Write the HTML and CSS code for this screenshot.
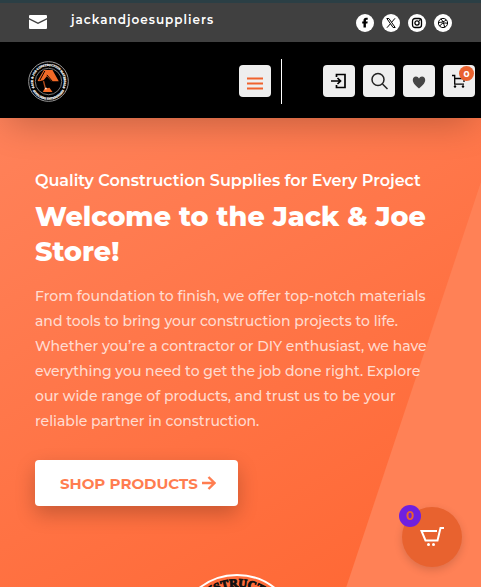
FILE: index.html
```html
<!DOCTYPE html>
<html lang="en">
<head>
<meta charset="utf-8">
<meta name="viewport" content="width=device-width, initial-scale=1">
<title>Jack &amp; Joe Suppliers</title>
<link rel="stylesheet" href="styles.css">
</head>
<body>
<svg class="defs" aria-hidden="true">
  <defs>
    <path id="arc-round" d="M62 109a47 47 0 0 1 0-94a47 47 0 0 1 0 94"/>
    <path id="arc-wide" d="M62 111a49 49 0 0 1 0-98a49 49 0 0 1 0 98"/>
    <path id="arc-under" d="M7 62a55 55 0 0 0 110 0"/>
  </defs>
</svg>
<header class="header">
  <div class="topbar">
    <a class="mail" href="#mail">
      <svg width="18" height="14" viewBox="0 0 18 14" aria-hidden="true"><path fill="#fff" d="M1 0h16a1 1 0 0 1 1 1v2L9 7.500 0 3V1a1 1 0 0 1 1-1zM0 4.500 9 9l9-4.500V13a1 1 0 0 1-1 1H1a1 1 0 0 1-1-1z"/></svg>
      <span>jackandjoesuppliers</span>
    </a>
    <nav class="social" aria-label="Social">
      <a href="#facebook" aria-label="Facebook"><svg viewBox="0 0 12 12"><path d="M4.500 10.500V6.500H3.200V4.500h1.300V3.400C4.500 1.700 5.500.8 7 .8h1.700v2H7.700c-.6 0-.8.300-.8.900v.8h1.800l-.3 2H6.900v4z"/></svg></a>
      <a href="#x" aria-label="X"><svg viewBox="0 0 12 12"><path fill="none" stroke="#000" d="M1.800 1.500h2.100l6.300 9H8.100zM10 1.300 6.700 5.200M5.200 7 2 10.700"/></svg></a>
      <a href="#instagram" aria-label="Instagram"><svg viewBox="0 0 12 12"><g fill="none" stroke="#000" stroke-width="1.300"><rect x="1.500" y="1.500" width="9" height="9" rx="2.500"/><circle cx="6" cy="6" r="2.100"/></g><circle cx="8.700" cy="3.300" r=".7"/></svg></a>
      <a href="#dribbble" aria-label="Dribbble"><svg viewBox="0 0 12 12"><g fill="none" stroke="#000"><circle cx="6" cy="6" r="4.600"/><path d="M4 1.800c2 2.400 3 5 3.600 8.500M1.500 5.400c3 .1 5.700-.5 7.700-2.600M2.600 9.200C4 6.500 7 5.300 10.600 6.300"/></g></svg></a>
    </nav>
  </div>
  <div class="navbar">
    <a class="logo" href="#home" aria-label="Jack and Joe home">
      <svg viewBox="0 0 124 124">
        <circle cx="62" cy="62" r="60" fill="#000" stroke="#999" stroke-width="3"/>
        <circle cx="62" cy="62" r="40" fill="none" stroke="#777" stroke-width="3"/>
        <text class="ring-small"><textPath href="#arc-round" startOffset="50%" text-anchor="middle">JACK &amp; JOE CONSTRUCTION MATERIALS</textPath></text>
        <text class="ring-small"><textPath href="#arc-under" startOffset="50%" text-anchor="middle">SUPPLIERS ENTERPRISES</textPath></text>
        <g fill="#ddd"><circle cx="16" cy="80" r="3"/><circle cx="108" cy="80" r="3"/></g>
        <path fill="#f26a27" d="M48 27h26l19 34H71L57 46 47 58 33 61l-4-1zM45 94l5-11 15-2 9 13z"/>
        <path d="M57 42l17 20M51 30 36 58" fill="none" stroke="#000" stroke-width="3"/>
        <path d="M47 61l5 20" fill="none" stroke="#b84c1c" stroke-width="4"/>
        <circle cx="54" cy="83" r="3" fill="#ffe0ce"/>
      </svg>
    </a>
    <div class="tools">
      <button class="tile" type="button" aria-label="Menu"><svg width="16" height="13" viewBox="0 0 16 13"><path d="M0 1.500h16M0 6.500h16M0 11.500h16" stroke="#f0622d" stroke-width="2"/></svg></button>
      <span class="divider"></span>
      <div class="actions">
        <a class="tile" href="#login" aria-label="Log in"><svg width="16" height="16" viewBox="0 0 16 16"><path d="M5.500 4V1.500H14v13H5.500V12M0 8h9M6.500 5l3 3-3 3" fill="none" stroke="#000" stroke-width="1.700"/></svg></a>
        <button class="tile" type="button" aria-label="Search"><svg width="18" height="18" viewBox="0 0 18 18"><g fill="none" stroke="#222" stroke-width="1.500"><circle cx="8" cy="7.500" r="6"/><path d="m12.500 12 5 5"/></g></svg></button>
        <a class="tile" href="#wishlist" aria-label="Wishlist"><svg class="heart" width="14" height="13" viewBox="0 0 14 13"><path fill="#444" d="M7 12.500C4 10 .8 7.300.8 4c0-2 1.300-3.500 3.200-3.500C5.300.5 6.400 1.200 7 2.500 7.600 1.200 8.700.5 10 .5c1.900 0 3.200 1.500 3.200 3.500 0 3.300-3.200 6-6.200 8.500z"/></svg></a>
        <a class="tile cart" href="#cart" aria-label="Cart"><svg width="16" height="14" viewBox="0 0 16 14"><path d="M1 1.500h2.700v8.700H13M4 4.500h9V8" fill="none" stroke="#000" stroke-width="1.300"/><circle cx="4" cy="12.500" r="1.200"/><circle cx="12" cy="12.500" r="1.200"/></svg><span class="count">0</span></a>
      </div>
    </div>
  </div>
</header>
<main class="hero">
  <div class="copy">
    <p class="lead">Quality Construction Supplies for Every Project</p>
    <h1>Welcome to the Jack &amp; Joe Store!</h1>
    <p class="text">From foundation to finish, we offer top-notch materials and tools to bring your construction projects to life. Whether you’re a contractor or DIY enthusiast, we have everything you need to get the job done right. Explore our wide range of products, and trust us to be your reliable partner in construction.</p>
    <a class="shop" href="#shop">SHOP PRODUCTS <svg width="14" height="14" viewBox="0 0 14 14" aria-hidden="true"><path d="M0 7h12M6.500 1l6 6-6 6" fill="none" stroke="#ff7d50" stroke-width="2.400"/></svg></a>
  </div>
  <svg class="emblem" viewBox="0 0 124 124" aria-hidden="true">
    <circle cx="62" cy="62" r="61" fill="none" stroke="#fff" stroke-width="2"/>
    <text class="ring"><textPath href="#arc-wide" startOffset="50%" text-anchor="middle">JACK &amp; JOE CONSTRUCTION MATERIALS</textPath></text>
  </svg>
</main>
<a class="floating" href="#basket" aria-label="Open basket">
  <svg width="24" height="20" viewBox="0 0 24 20"><path d="M17 4H1.500l4 9.500h12L20.500 1H24" fill="none" stroke="#fff" stroke-width="2"/><circle cx="8.500" cy="17.500" r="1.500" fill="#fff"/><circle cx="13.500" cy="17.500" r="1.500" fill="#fff"/></svg>
  <span class="bubble">0</span>
</a>
</body>
</html>
```

FILE: styles.css
```css
* { box-sizing: border-box; }

body {
  margin: 0;
  height: 100vh;
  display: flex;
  flex-direction: column;
  overflow: hidden;
  font-family: Montserrat, Inter, "Open Sans", sans-serif;
  color: #fff;
}

a { color: inherit; text-decoration: none; }
svg { display: block; }
.defs { position: absolute; width: 0; height: 0; }

.header {
  position: relative;
  z-index: 1;
  box-shadow: 0 12px 36px -8px rgba(0, 0, 0, 0.25);
}

.topbar {
  display: flex;
  justify-content: space-between;
  align-items: center;
  height: 42px;
  padding: 1px 29px 0;
  border-top: 3px solid #2b3f45;
  background: #404040;
}

.mail {
  display: flex;
  align-items: center;
  gap: 24px;
  padding-bottom: 2px;
  font-size: 12px;
  font-weight: 600;
  line-height: 16px;
  letter-spacing: 1px;
}

.mail span { padding-bottom: 4px; }

.social { display: flex; gap: 8px; }

.social a {
  display: grid;
  place-items: center;
  width: 18px;
  height: 18px;
  border-radius: 50%;
  background: #fff;
}

.social svg { width: 12px; height: 12px; }

.navbar {
  display: flex;
  justify-content: space-between;
  align-items: center;
  height: 76px;
  padding: 2px 6px 0 28px;
  background: #000;
}

.logo svg { width: 41px; height: 41px; }

.ring, .ring-small {
  font: bold 12px "Liberation Serif", serif;
  fill: #111;
}

.ring { stroke: #111; stroke-width: 1px; }
.ring-small { font-size: 9px; fill: #eee; stroke: #ddd; stroke-width: 1px; }

.tools { display: flex; align-items: center; }

.tile {
  display: grid;
  place-items: center;
  width: 32px;
  height: 32px;
  padding: 0;
  border: 0;
  border-radius: 4px;
  background: #eee;
}

.tools > .tile { padding-top: 4px; }
.divider { width: 1px; height: 45px; margin: 0 41px 0 10px; background: #fff; }
.actions { display: flex; gap: 8px; }
.heart { margin-top: 2px; }
.cart { position: relative; }

.count {
  position: absolute;
  top: 1px;
  right: 1px;
  width: 15px;
  height: 15px;
  border-radius: 50%;
  background: #e9622f;
  font-size: 9px;
  font-weight: 700;
  line-height: 15px;
  text-align: center;
}

.hero {
  position: relative;
  flex: 1;
  min-height: 0;
  overflow: hidden;
  padding: 53px 42px 0 35px;
  background: linear-gradient(150deg, #ff825a, #ff6936 90%);
}

.hero::before {
  content: "";
  position: absolute;
  inset: 64px 0 0 72%;
  background: #ff8156;
  clip-path: polygon(100% 0, 100% 100%, 0 100%);
}

.copy { position: relative; }

.lead {
  margin: 0;
  font-size: 16px;
  font-weight: 600;
  line-height: 20px;
}

h1 {
  margin: 8px 0 15px;
  font-size: 27px;
  font-weight: 800;
  line-height: 35px;
}

.text {
  margin: 0;
  color: rgba(255, 255, 255, 0.75);
  font-size: 14px;
  font-weight: 500;
  line-height: 25px;
}

.shop {
  display: inline-flex;
  align-items: center;
  gap: 4px;
  height: 46px;
  margin-top: 26px;
  padding: 0 22px 0 25px;
  border-radius: 4px;
  background: #fff;
  box-shadow: 0 8px 20px rgba(0, 0, 0, 0.22);
  color: #ff7d50;
  font-size: 15px;
  font-weight: 700;
}

.emblem { position: relative; width: 124px; margin: 68px auto 0; }

.floating {
  position: fixed;
  right: 19px;
  bottom: 20px;
  z-index: 2;
  display: grid;
  place-items: center;
  width: 60px;
  height: 60px;
  border-radius: 50%;
  background: #e8622f;
  box-shadow: 0 3px 8px rgba(0, 0, 0, 0.15);
}

.bubble {
  position: absolute;
  top: -2px;
  left: -3px;
  width: 22px;
  height: 22px;
  border-radius: 50%;
  background: #6f20df;
  color: #e8622f;
  font-size: 12px;
  font-weight: 700;
  line-height: 22px;
  text-align: center;
}
```
